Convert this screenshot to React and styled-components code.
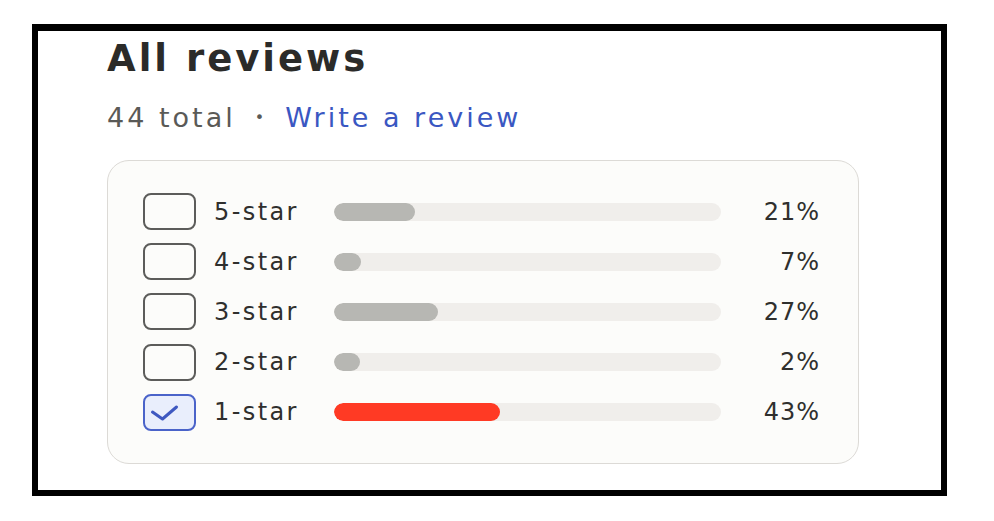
import React from "react";
import styled, { createGlobalStyle } from "styled-components";

const GlobalStyle = createGlobalStyle`
  html, body {
    margin: 0;
    padding: 0;
    background: #ffffff;
  }
  body {
    font-family: "DejaVu Sans", "Liberation Sans", sans-serif;
  }
`;

const ratings = [
  { label: "5-star", pct: 21, checked: false },
  { label: "4-star", pct: 7, checked: false },
  { label: "3-star", pct: 27, checked: false },
  { label: "2-star", pct: 2, checked: false },
  { label: "1-star", pct: 43, checked: true },
];

export default function App() {
  return (
    <>
      <GlobalStyle />
      <Frame>
        <Title>All reviews</Title>
        <Meta>
          <Total>44 total</Total>
          <Dot>•</Dot>
          <WriteLink href="#">Write a review</WriteLink>
        </Meta>
        <Card>
          {ratings.map((r) => (
            <Row key={r.label}>
              <Box checked={r.checked}>
                {r.checked && (
                  <svg width="53" height="37" viewBox="0 0 53 37">
                    <polyline
                      points="9.5,18 19.5,25 33.5,13"
                      fill="none"
                      stroke="#3e58c0"
                      strokeWidth="3"
                      strokeLinecap="round"
                      strokeLinejoin="round"
                    />
                  </svg>
                )}
              </Box>
              <Label>{r.label}</Label>
              <Track>
                <Fill
                  red={r.checked}
                  style={{ width: `max(${r.pct}%, 26px)` }}
                />
              </Track>
              <Pct>{r.pct}%</Pct>
            </Row>
          ))}
        </Card>
      </Frame>
    </>
  );
}

const Frame = styled.div`
  box-sizing: border-box;
  margin: 24px 0 0 32px;
  width: 915px;
  height: 472px;
  border: 6px solid #000;
  border-top-width: 7px;
  padding: 6px 0 0 69px;
`;

const Title = styled.h1`
  margin: 0;
  font-size: 37px;
  line-height: 44px;
  font-weight: 700;
  color: #2b2b29;
  letter-spacing: 3px;
`;

const Meta = styled.div`
  display: flex;
  align-items: center;
  margin-top: 21px;
  font-size: 27px;
  line-height: 32px;
`;

const Total = styled.span`
  color: #5a5a57;
  letter-spacing: 3px;
`;

const Dot = styled.span`
  color: #5a5a57;
  font-size: 16px;
  margin: 0 21px 0 19px;
`;

const WriteLink = styled.a`
  color: #3a57c2;
  text-decoration: none;
  letter-spacing: 3px;
`;

const Card = styled.div`
  box-sizing: border-box;
  margin-top: 26px;
  width: 752px;
  height: 304px;
  border: 1.5px solid #dcdad6;
  border-radius: 22px;
  background: #fcfcfa;
  padding: 32px 0 0 35px;
  display: flex;
  flex-direction: column;
  gap: 13.2px;
`;

const Row = styled.div`
  display: flex;
  align-items: center;
  height: 37px;
`;

const Box = styled.div`
  box-sizing: border-box;
  flex: none;
  width: 53px;
  height: 37px;
  border-radius: 8px;
  border: 2px solid ${(p) => (p.checked ? "#4a63c9" : "#5c5c5a")};
  background: ${(p) => (p.checked ? "#e9eefc" : "transparent")};
  position: relative;
  svg {
    position: absolute;
    left: -2px;
    top: -2px;
  }
`;

const Label = styled.span`
  width: 120px;
  margin-left: 18px;
  font-size: 24px;
  letter-spacing: 2.4px;
  color: #2f2f2d;
`;

const Track = styled.div`
  width: 387px;
  height: 18px;
  border-radius: 9px;
  background: #f0eeeb;
  overflow: hidden;
`;

const Fill = styled.div`
  height: 100%;
  border-radius: 9px;
  background: ${(p) => (p.red ? "#ff3a24" : "#b7b7b3")};
`;

const Pct = styled.span`
  width: 99px;
  text-align: right;
  font-size: 24px;
  letter-spacing: 1px;
  color: #2f2f2d;
`;
